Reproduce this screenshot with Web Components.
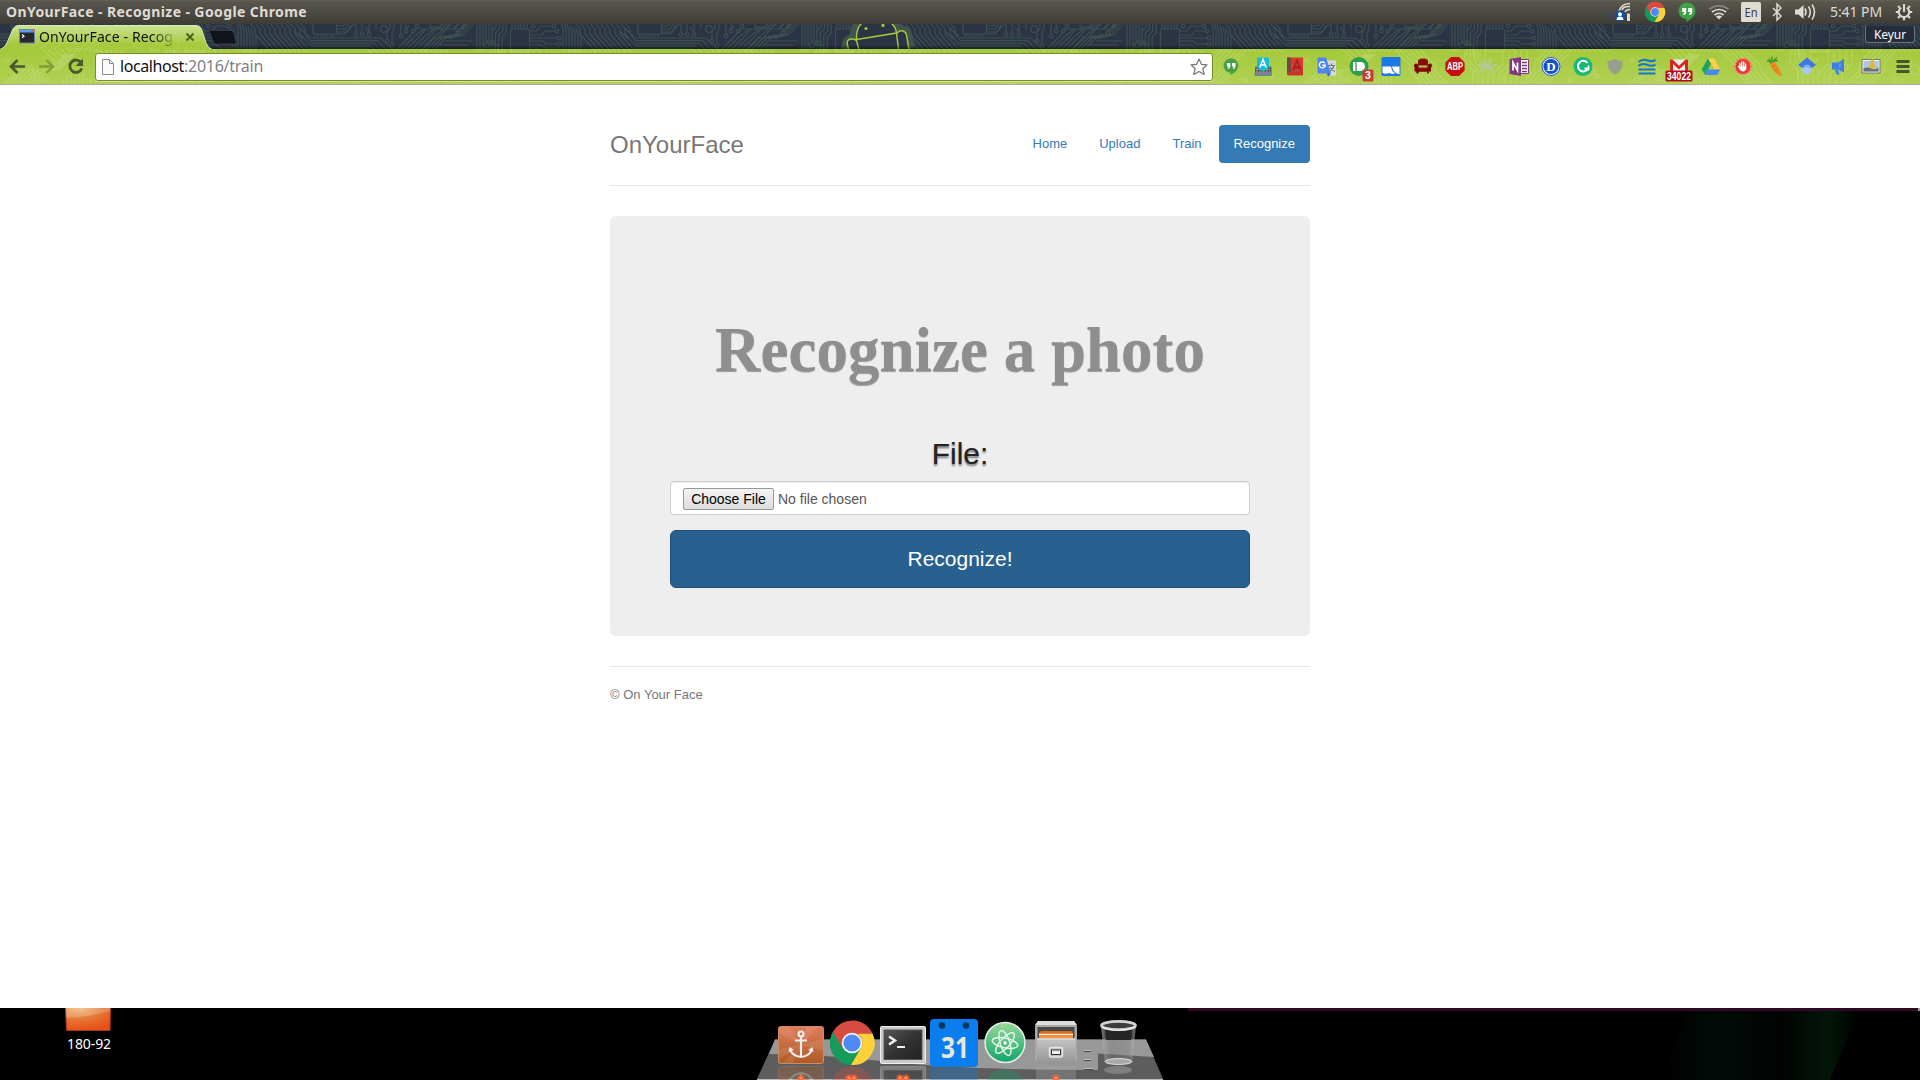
<!DOCTYPE html>
<html lang="en">
<head>
<meta charset="utf-8">
<title>OnYourFace - Recognize</title>
<style>
html,body{margin:0;height:100%;background:#000;overflow:hidden}
body{display:flex;flex-direction:column;width:1920px;height:1080px;font-family:"Noto Sans","Open Sans",sans-serif}
</style>
</head>
<body>
<system-panel></system-panel>
<tab-strip></tab-strip>
<browser-toolbar></browser-toolbar>
<web-page>
  <site-header>OnYourFace</site-header>
  <recognize-form></recognize-form>
  <site-footer>© On Your Face</site-footer>
</web-page>
<desktop-area></desktop-area>
<script>
const define=(name,css,html)=>customElements.define(name,class extends HTMLElement{
  connectedCallback(){
    if(this.shadowRoot)return;
    const t=document.createElement('template');
    t.innerHTML=`<style>:host,*{box-sizing:border-box}${css}</style>${html}`;
    this.attachShadow({mode:'open'}).appendChild(t.content.cloneNode(true));
  }
});

/* Label whose letter spacing is adjusted so that the text fills a given width. */
customElements.define('fit-label',class extends HTMLElement{
  connectedCallback(){
    if(this.shadowRoot)return;
    this.attachShadow({mode:'open'}).innerHTML='<style>:host{display:inline-block;white-space:nowrap;flex:none}</style><span><slot></slot></span>';
    requestAnimationFrame(()=>this.fit());
    this.fit();
  }
  fit(){
    const s=this.shadowRoot.querySelector('span');
    s.style.letterSpacing='0px';
    const n=this.textContent.length,w=s.getBoundingClientRect().width;
    if(w)s.style.letterSpacing=((+this.getAttribute('w')-w)/n).toFixed(3)+'px';
  }
});

/* Repeating circuit-board artwork, 325px wide. */
function circuit(id,color,dark,x0,y0){
  let d='',c='';
  const ring=(x,y,r=1.8)=>c+=`<circle cx="${x}" cy="${y}" r="${r}"/>`;
  for(let x=5;x<26;x+=3)d+=`M${x} 34v3`;
  for(let i=0;i<3;i++)d+=`M26 ${26+i*3}h${7+i*2}l4 -${5+i}`;
  d+='M26 34h9l10-11h68M46 24v8M52 24v8M59 24v8l-4-5M66 24v5M80 24v4l-3 4v7M84 24v5l-2 4v10M91 24v10M96 24v5l3-3';
  [[46,34.5],[52,34.5],[59,34.5],[77,41],[82,45.5],[91,36],[96,31],[103,31],[107,26],[154,26],[148,32.5],[223,26],[244,26],[247,31],[249,38],[249,44]].forEach(p=>ring(...p));
  ring(74,29,3.4);ring(177,45,2.6);
  for(let i=0;i<5;i++)d+=`M-40 ${38+i*2.6}H${71-i*3.6}l14 14`;
  for(let i=0;i<7;i++)d+=`M${84+i*5} 52l${15} -${15}l${i%2?10:7} -${8}h${22-i}l6 -6`;
  for(let i=0;i<4;i++)d+=`M${112+i*5} ${50-i}l12 -12h${18-i}l12 -14`;
  d+='M115 29h16l6-5M121 27v2M124 27v2M127 27v2M130 45h28M136 41h26';
  for(let i=0;i<6;i++)d+=`M${167+i*3} 20V${i>2?40:52}${i>2?'l6 6v8':''}`;
  for(let i=0;i<4;i++)d+=`M${186+i*3.4} 22v${5+i*2}l-4 4v24`;
  for(let i=0;i<6;i++)d+=`M${202+i*3} 24v5M${202+i*3} 49v3`;
  d+='M220 31h6l5-5h11M220 35h12l3-4h10M220 38h27M220 41h13l3 3h11M220 45h11l4 3h16M220 48h7l4 4';
  for(let i=0;i<7;i++)d+=`M${253+i*3} ${52}v-${24-i*1.5}l-2-7`;
  for(let i=0;i<11;i++)d+=`M${264+i*5} 22l${6} 7v5l16 18`;
  d+='M310 31l8 8M314 27l10 10';
  /* lower half, seen through the toolbar */
  for(let i=0;i<6;i++)d+=`M${20+i*5} 84l14-14h${30-i*3}l16-16M${110+i*5} 50l15 15v5l14 16M${262+i*5} 50l-12 12v8l-14 14`;
  for(let i=0;i<8;i++)d+=`M${78+i*4} 88v-${10+i%3*4}`;
  [[22,60],[30,78],[46,68],[62,80],[190,72],[205,60],[219,78],[236,66],[300,62],[312,76],[285,80]].forEach(p=>ring(p[0],p[1],2));
  ring(52,78,6);ring(52,78,3);ring(305,70,5);
  for(let i=0;i<5;i++)d+=`M${180+i*5} 50v${12}l8 8v16M${208+i*6} 84v-10l10-10v-14`;
  return `<defs><pattern id="${id}" patternUnits="userSpaceOnUse" x="${x0}" y="${y0}" width="325" height="90"><g fill="none" stroke="${color}" stroke-width="1.15"><path d="${d}"/>${c}<rect x="3" y="22" width="23.5" height="12" rx="1" fill="${dark}"/><rect x="120" y="20" width="11" height="7" fill="${dark}"/><rect x="200.500" y="29" width="19" height="23" rx="1.500" fill="${dark}"/></g></pattern></defs>`;
}

const chrome=(r)=>`<g transform="scale(${r/22})"><circle r="22" fill="#db4437"/><path d="M-19-11A22 22 0 0 0-1 22L9 5-9 6Z" fill="#149a58"/><path d="M-19-11A22 22 0 0 0-1 22L9.500 4.500A10 10 0 0 1-9 5Z" fill="#159c5a"/><path d="M20.500-9.500A22 22 0 0 1-1 22L9 5A10.500 10.500 0 0 0 5-9.500Z" fill="#fdd13c"/><path d="M-19-11A22 22 0 0 1 20.500-9.500H0A10 10 0 0 0-9.500 5Z" fill="#d84b40"/><circle r="10.300" fill="#f3f3f3"/><circle r="8.600" fill="#4e8af4"/></g>`;
const hang=(c)=>`<path d="M0-9.500a8.500 8.500 0 0 0-8.500 8.500c0 4.800 4 8 8 8v3c4.500-2.500 9-6.500 9-11.500A8.500 8.500 0 0 0 0-9.500Z" fill="${c}"/><path d="M-4.800-4h4v4q0 2.600-3 3l0-1.500q1.300-.3 1.300-1.500h-2.300zM1.200-4h4v4q0 2.600-3 3l0-1.500q1.300-.3 1.300-1.500h-2.300z" fill="#fff"/>`;

/* ---------- system panel ---------- */
define('system-panel',`
:host{display:flex;flex:none;height:24px;justify-content:space-between;align-items:center;background:linear-gradient(#646251 0,#58564e 2px,#3d3c37 100%);color:#dfdbd2;font-size:14px;line-height:24px;padding-left:6px}
.t{font-weight:bold}
.tray{display:flex;align-items:center;height:24px}
svg{display:block;overflow:visible}
.time{margin:0 6px 0 7px;width:52px;font-size:14px}
`,`<fit-label class="t" w="301">OnYourFace - Recognize - Google Chrome</fit-label>
<div class="tray">
<svg width="32" height="24" viewBox="-16 -12 32 24"><g fill="none" stroke="#dfdbd2" stroke-width="1.600"><path d="M-4-1q2-7 11-7.500M-1-2q1-4 8-3.500M2 0q1-2.500 5-2.500"/></g><path d="M4 1.500h3v7.500H4z" fill="#dfdbd2"/><circle cx="-3" cy="4" r="5.600" fill="#0f4f9e"/><circle cx="-3" cy="2.300" r="2" fill="#fff"/><path d="M-6.500 8q0-3.500 3.500-3.500t3.500 3.500z" fill="#fff"/></svg>
<svg width="32" height="24" viewBox="-16 -12 32 24">${chrome(10)}</svg>
<svg width="32" height="24" viewBox="-16 -12 32 24">${hang('#43a047')}</svg>
<svg width="32" height="24" viewBox="-16 -12 32 24"><g fill="none" stroke="#dfdbd2" stroke-width="1.700"><path d="M-9.500-3q9.500-6.500 19 0" stroke="#8c8a83"/><path d="M-7 0q7-5 14 0"/><path d="M-4.500 3q4.500-3.500 9 0"/></g><path d="M0 7.500l-3-3q3-2.200 6 0z" fill="#dfdbd2"/></svg>
<svg width="32" height="24" viewBox="-16 -12 32 24"><rect x="-10" y="-10" width="20" height="20" rx="1.500" fill="#dfdbd2"/><text y="5" text-anchor="middle" textLength="13" lengthAdjust="spacingAndGlyphs" font-size="13" fill="#3c3b37" font-family="Noto Sans,sans-serif">En</text></svg>
<svg width="20" height="24" viewBox="-10 -12 20 24"><path d="M-4-4L4 4 0 8V-8l4 4L-4 4" fill="none" stroke="#dfdbd2" stroke-width="1.500"/></svg>
<svg width="36" height="24" viewBox="-18 -12 36 24"><path d="M-10-2.500h3.500l5-4.500V7l-5-4.500H-10z" fill="#dfdbd2"/><g fill="none" stroke="#dfdbd2" stroke-width="1.600"><path d="M0-3.500q2 3.500 0 7M3.500-5.500q3.500 5.500 0 11M7-7.500q5 7.500 0 15"/></g></svg>
<span class="time"><fit-label w="52">5:41 PM</fit-label></span>
<svg width="32" height="24" viewBox="-16 -12 32 24"><g fill="none" stroke="#dfdbd2"><path d="M-2.800-4.400a5.200 5.200 0 1 0 5.600 0" stroke-width="2"/><path d="M0-8V0" stroke-width="2"/><path d="M-4.500-4.500l-1.500-1.500M4.500-4.500l1.500-1.500M-4-4M-4 4l-2 2M4 4l2 2M-8.200 0h3M8.200 0h-3M0 8.200V5" stroke-width="2.200"/></g></svg>
</div>`);

/* ---------- tab strip ---------- */
define('tab-strip',`
:host{display:flex;flex:none;position:relative;height:25px;background:#2b3344;justify-content:space-between;line-height:25px}
.bg{position:absolute;inset:0;display:block}
.tab{position:relative;display:flex;align-items:center;width:240px;height:25px;padding-left:19px;font-size:14px;color:#111}
.title{width:135px;margin-left:4px;overflow:hidden;-webkit-mask-image:linear-gradient(90deg,#000 114px,rgba(0,0,0,.15) 135px);mask-image:linear-gradient(90deg,#000 114px,rgba(0,0,0,.15) 135px)}
.tab svg{display:block;position:relative;flex:none}
.user{position:relative;margin:1px 5px 6px 0;width:50px;height:18px;border:1px solid #69707b;border-top-color:#343b49;border-radius:3px;background:#252c3a;color:#fff;font-size:12px;line-height:18px;text-align:center}
`,`<svg class="bg" width="1920" height="25" viewBox="0 24 1920 25">${circuit('c','#3b4f4e','#2b3344',310,0)}<rect y="24" width="1920" height="25" fill="url(#c)"/>
<defs><linearGradient id="s" x2="0" y2="1"><stop offset="0" stop-color="#000" stop-opacity="0"/><stop offset="1" stop-color="#000" stop-opacity=".45"/></linearGradient>
<linearGradient id="tg" x2="0" y2="1"><stop offset="0" stop-color="#cce292"/><stop offset=".8" stop-color="#a6c93d"/></linearGradient></defs>
<path d="M852 41q-4 0-4 8M860 26q-5 6-4 15M893 24q5 5 5 9 8-3 8 4l3 12M858 41v8M897 33l2 16" fill="none" stroke="#40544b" stroke-width="13"/>
<path d="M857 49V37Q857 28 862 24H891Q897 29 897 35L899 49z" fill="#2b3344"/>
<path d="M849 49l-1.500-5q-.5-5 4.500-5 4 0 5 2l2 8z" fill="#2b3344"/><path d="M899 49l-2-16q3-3 6-2 3 1 3.500 4l2.500 14z" fill="#2b3344"/>
<path d="M848.500 49l-1.300-5q-.5-5 4.500-5 4 0 5 2l2 8M856.500 40Q856 28 862 23M891 23q5 4 5.500 10L856.500 39.500M896.500 33l2 16M897 33q3-3 6-2 3 1 3.500 4l2.500 15" fill="none" stroke="#a4c639" stroke-width="1.500"/>
<circle cx="866" cy="28.500" r="1.600" fill="#a4c639"/><circle cx="883" cy="25.500" r="1.600" fill="#a4c639"/>
<rect y="45" width="1920" height="4" fill="url(#s)"/>
<path d="M0 49.500Q5 48 7 43L13 29Q15 25.500 18 25.500H196Q200 25.500 201.500 29L206 43Q208 48 212 49.500Z" fill="url(#tg)" stroke="#d9ebae" stroke-width="1"/>
<g fill="none" stroke="#c2db7b" stroke-width="1" opacity=".45"><path d="M30 49l16-14h20l9-9M40 49l12-10h18l12-12M54 49l8-6h14l16-16M66 49h14l18-18h30M75 49h12l14-14h32l8 7M90 49l14-10h24l10 10M145 26l12 12h14M150 49l10-7h10M178 26v23"/></g>
<path d="M209 30.500h22q2 0 2.500 2l2.500 9q.5 2.500-2 2.500h-17q-3 0-4-3z" fill="#10141a" stroke="#3e444c" stroke-width=".7"/></svg>
<div class="tab">
<svg width="16" height="15" viewBox="0 0 16 15"><rect x=".5" y=".5" width="15" height="13.500" fill="#26282b" stroke="#7186a8"/><path d="M1 1h14v2.500H1z" fill="#5e9df0"/><path d="M12 1.300h2v1.500h-2z" fill="#e35a41"/><path d="M3 5.500l2 1.700-2 1.700" fill="none" stroke="#fff" stroke-width="1.200"/></svg>
<div class="title"><fit-label w="134">OnYourFace - Recog</fit-label></div>
<svg width="32" height="16" viewBox="-16 -8 32 16"><path d="M-3.500-3.500l7 7M3.500-3.500l-7 7" stroke="#4d6118" stroke-width="1.900"/></svg>
</div>
<div class="user"><fit-label w="32">Keyur</fit-label></div>`);

/* ---------- toolbar ---------- */
const icons=[
`<g transform="scale(.86)">${hang('#43a047')}</g>`,
`<rect x="-8" y="0" width="16.500" height="9.500" rx="1" fill="#5a6268"/><path d="M-8.500 6h17v3.500h-17z" fill="#78838a"/><path d="M-7 3h14M-7 5.500h14" stroke="#aab2b6" stroke-dasharray="2 1.300"/><path d="M-6-9H6V1L0 5-6 1z" fill="#19bcd8"/><path d="M-3.200 1L0-7 3.200 1M-2-1.500h4" fill="none" stroke="#fff" stroke-width="1.500"/>`,
`<path d="M-8-9H8V9H-6q-2 0-2-2z" fill="#d93a30"/><path d="M-8-9h4V6h-4z" fill="#6b4a47"/><path d="M-8 7q0-2 3-2H8v3.500H-6q-2 0-2-1.500z" fill="#c2352d"/><path d="M-2 4L2-6 6 4M-.5 1h5" fill="none" stroke="#a3231c" stroke-width="1.800"/>`,
`<path d="M0-6h9V9H3z" fill="#d6d8da"/><path d="M1-1h7M4.500-3v2M7-1Q5 4 2 5M3 1q2 3 5 4" stroke="#68757c" stroke-width="1.200" fill="none"/><path d="M-9.500-9H-1L4 7H-8q-1.500 0-1.500-1.500z" fill="#4a86ee"/><path d="M0 7h4L1 10z" fill="#2a56c6"/><path d="M-2.300-3.500a3 3 0 1 0 .6 2.300h-3" fill="none" stroke="#fff" stroke-width="1.400"/>`,
`<circle r="9.500" fill="#2f9e4c"/><rect x="-6" y="-4.500" width="2.400" height="9" rx=".8" fill="#fff"/><path d="M-2.300-4.500H1.500a4.500 4.500 0 0 1 0 9H-2.300z" fill="#fff"/><rect x="3.500" y="3" width="11" height="12" rx="1.500" fill="#c53e33"/><text x="9" y="12.800" text-anchor="middle" font-size="10.500" font-weight="bold" fill="#fff" font-family="Liberation Sans,sans-serif">3</text>`,
`<rect x="-9.500" y="-9.500" width="19" height="19" rx="1.500" fill="#1b78e6"/><path d="M-8.500 0H0Q1 6 4.500 6.500 1 8.500-1 6.500-8.500 8-8.500 6z" fill="#fff"/><path d="M1 0h7.500v8Q2 6 1 0z" fill="#fff"/>`,
`<path d="M-5-1v-4q0-3 5-3t5 3v4z" fill="#8b0a08"/><path d="M-5 1h10v4H-5z" fill="#a10d08"/><path d="M-9-1q0-2 2-2t2.500 3l.5 3H4l.5-3Q5-3 7-3t2 2q0 1.500-1 2v4h-2l-.5 2H4V5H-4l-.500 2h-2L-7 5h-1.500V1Q-9 .5-9-1z" fill="#7d0705"/>`,
`<path d="M-4-9.600H4L9.600-4V4L4 9.600H-4L-9.600 4V-4z" fill="#cc0c0c"/><text y="3.900" text-anchor="middle" textLength="16" lengthAdjust="spacingAndGlyphs" font-size="10.500" font-weight="bold" fill="#fff" font-family="Liberation Sans,sans-serif">ABP</text>`,
`<g fill="none" stroke="#b9c59c" stroke-width="2" stroke-linecap="round"><path d="M-4-6q0 3 4 4t4-4M-8-2q4 3 8 1M0-1q4 3 9-1M-7 5q4-1 6-5M1 0q1 5 7 5"/></g>`,
`<path d="M0-7h9.500V7H0z" fill="#fff" stroke="#80397b"/><path d="M3-4h5M3-1h5M3 2h5M3 5h5" stroke="#80397b" stroke-width="1.500"/><path d="M-9.500-7.500L2-9.500v19L-9.500 7.500z" fill="#80397b"/><path d="M-6 4V-4L-1.500 4V-4" fill="none" stroke="#fff" stroke-width="1.700"/>`,
`<circle r="9.300" fill="#f5f8ff"/><circle r="9" fill="none" stroke="#1450c8" stroke-width="1"/><circle r="7.600" fill="#1450c8"/><text y="4.600" text-anchor="middle" font-size="13" font-weight="bold" fill="#fff" font-family="Liberation Serif,serif">D</text>`,
`<circle r="9.500" fill="#17b978"/><path d="M4.500-3.500A5.300 5.300 0 1 0 5 2H1.500" fill="none" stroke="#fff" stroke-width="2"/><path d="M5.500-1v5" stroke="#fff" stroke-width="1.500"/>`,
`<path d="M0-7.500q4 2 7.500 2Q8.500 4 0 8.500-8.500 4-7.500-5.500-4-5.500 0-7.500z" fill="#989f8c"/>`,
`<g fill="none" stroke="#1b76c9" stroke-width="2.100"><path d="M-8.500-4.500q4-3.500 8.500-1.700t8.500-.300"/><path d="M-8.500-.700q4-3 8.500-1t8.500 0"/><path d="M-8.500 3H8.500M-8.500 7H8.500"/></g>`,
`<rect x="-9" y="-7" width="18" height="13" rx="1" fill="#f1efef"/><path d="M-9 6V-7h2.500L0-.8 6.500-7H9V6H6V-2.500L0 3-6-2.500V6z" fill="#d8261c"/><rect x="-13.500" y="4" width="27" height="11" rx="1.500" fill="#b00b12"/><text y="13.200" text-anchor="middle" textLength="24" lengthAdjust="spacingAndGlyphs" font-size="10.500" font-weight="bold" fill="#fff" font-family="Liberation Sans,sans-serif">34022</text>`,
`<path d="M-3-8H3L9.300 3H3.500z" fill="#ffcf48"/><path d="M-3-8L0-2.500-6 8.500-9.300 3z" fill="#1da362"/><path d="M-3 3H9.300L6 8.500H-6z" fill="#4688f4"/>`,
`<circle r="8.500" fill="#e33b2d"/><circle r="8" fill="none" stroke="#f59a8d"/><path d="M-3 2.500v-5.500M-1.200 1v-5.500M.7 1v-5.500M2.600 2v-4.500M-3 1.500l-1.500-1.500" stroke="#fff" stroke-width="1.300" stroke-linecap="round"/><path d="M-3.600 0h6.800v2q-.8 3-3.200 3T-3.600 2z" fill="#fff"/>`,
`<path d="M-5-3l4-2Q4 0 7 9q-2 1-3 0Q-4 3-5-3z" fill="#ee8a1d"/><path d="M-4-3L-6-8M-3-4V-10M-2-5L2-9M-3-4l-5-2M-2-5l5-1" stroke="#3e9b2f" stroke-width="1.600"/><path d="M-3 0l3-1.500M0 4l2-1" stroke="#cf6d0e"/>`,
`<path d="M0-9L9-1.500 4 2H-4L-9-1.500z" fill="#3c78e0"/><circle cy="3" r="4.700" fill="#a6c8f8"/><path d="M-4.500 1.500Q0-2 4.500 1.500" fill="none" stroke="#6ea1ef" stroke-width="1.500"/>`,
`<g transform="translate(-1 0)"><path d="M-6-4H0L6-7.500V6L0 3h-6z" fill="#3f80e8"/><path d="M-3 3h3l1.500 5h-3z" fill="#3f80e8"/><path d="M2-3V1.500" stroke="#79a9f3"/></g>`,
`<rect x="-9" y="-7" width="18" height="13.500" fill="#f4f1ea" stroke="#77756d"/><path d="M-7.500-5.500h15V5h-15z" fill="#a8c9df"/><path d="M-7.500 2q4-2 8 0t7-1v4h-15z" fill="#66707a"/><path d="M-.3-7h3v5.500h2.500L1.200 3-2.800-1.500h2.500z" fill="#efb51c"/>`,
`<path d="M-6.500-5h13M-6.500 0h13M-6.500 5h13" stroke="#46562a" stroke-width="3"/>`
];
define('tool-icon',`:host{display:block;flex:none;width:32px;height:35px}`,`<slot></slot>`);
define('address-bar',`
:host{display:flex;align-items:center;width:1118px;height:28px;border:1px solid #748f29;border-radius:3px;background:#fff;padding:0 4px 0 6px;font-size:16px;line-height:26px;color:#808080;box-shadow:0 1px #cfe398}
b{font-weight:normal;color:#111}
svg{display:block;flex:none}
.url{display:flex;margin:-1px 0 1px 6px;flex:1}
`,`<svg width="12" height="16" viewBox="0 0 12 16"><path d="M.5.500h7l4 4v11H.5z" fill="#fafafa" stroke="#8b8b8b"/><path d="M7.500.500v4h4" fill="none" stroke="#8b8b8b"/></svg>
<div class="url"><b><fit-label w="64">localhost</fit-label></b><fit-label w="79">:2016/train</fit-label></div>
<svg width="18" height="18" viewBox="-9 -9 18 18"><path d="M0-8L2.400-2.700 8-2.200 3.800 1.700 5.200 7.500 0 4.500-5.200 7.500-3.800 1.700-8-2.200-2.400-2.700z" fill="#fff" stroke="#757575" stroke-width="1.200" stroke-linejoin="round"/></svg>`);
define('browser-toolbar',`
:host{display:flex;flex:none;position:relative;height:36px;border-bottom:1px solid #a9a9a9;background:linear-gradient(#a4c93b,#b1d154)}
.bg{position:absolute;left:0;top:0;display:block}
.nav,address-bar,.ext{position:relative}
.nav{display:flex;width:94px;height:35px}
.nav svg{display:block}
address-bar{margin:4px 2px 0 1px}
.ext{display:flex}
.ext svg{display:block;overflow:visible}
`,`<svg class="bg" width="1920" height="35" viewBox="0 49 1920 35">${circuit('t','#c4dc80','none',310,0)}<rect y="49" width="1920" height="35" fill="url(#t)" opacity=".5"/></svg>
<div class="nav"><svg width="94" height="35" viewBox="0 0 94 35"><g fill="none" stroke="#4d562f" stroke-width="2.600"><path d="M11 17.500h14M17.500 11l-6.500 6.500 6.500 6.500"/><path d="M39 17.500h14M46.500 11l6.500 6.500-6.500 6.500" stroke="#839d3a" stroke-width="2.300"/><path d="M81 13.500a6.200 6.200 0 1 0 .8 6" stroke-width="2.800"/></g><path d="M83 9.500v7.500h-7.500z" fill="#4d562f"/></svg></div>
<address-bar></address-bar>
<div class="ext">${icons.map(i=>`<tool-icon><svg width="32" height="35" viewBox="-16 -17.500 32 35">${i}</svg></tool-icon>`).join('')}</div>`);

/* ---------- page ---------- */
define('web-page',`:host{display:flex;flex-direction:column;align-items:center;flex:none;height:923px;background:#fff;padding-top:40px;font-family:"Liberation Sans",Arial,sans-serif;font-size:13px;color:#333}`,`<slot></slot>`);
define('nav-pill',`:host{display:block;padding:10px 15px;height:38px;line-height:18px;color:#337ab7;border-radius:4px}:host([active]){background:#337ab7;color:#fff}`,`<slot></slot>`);
define('site-header',`
:host{display:flex;justify-content:space-between;align-items:flex-start;width:700px;height:61px;border-bottom:1px solid #e5e5e5}
h3{margin:0;font-size:24px;font-weight:normal;line-height:40px;color:#777}
nav{display:flex;gap:2px}
`,`<h3><slot></slot></h3><nav><nav-pill>Home</nav-pill><nav-pill>Upload</nav-pill><nav-pill>Train</nav-pill><nav-pill active>Recognize</nav-pill></nav>`);
define('file-field',`
:host{display:flex;align-items:center;height:34px;border:1px solid #ccc;border-radius:4px;background:#fff;box-shadow:inset 0 1px 1px rgba(0,0,0,.075);padding:1px 12px 0;font-size:14px;color:#555}
button{width:91px;height:22px;margin:0 4px 0 0;padding:0;border:1px solid #979797;border-radius:2px;background:linear-gradient(#f4f4f4,#dcdcdc);font:14px "Liberation Sans",Arial,sans-serif;color:#000;white-space:nowrap}
`,`<button>Choose File</button><span>No file chosen</span>`);
define('recognize-form',`
:host{display:flex;flex-direction:column;width:700px;height:420px;margin-top:30px;padding:99px 60px 0;border-radius:6px;background:#eee;text-align:center}
h1{margin:0;font:bold 63px/70px "Liberation Serif","Times New Roman",serif;color:#8e8e8e;text-shadow:0 1px 1px #999;white-space:nowrap}
label{display:block;margin-top:52px;font-size:30px;line-height:33px;color:#222;text-shadow:0 2px 2px #777}
file-field{margin-top:11px}
.go{margin-top:15px;height:58px;border:1px solid #204d74;border-radius:6px;background:#286090;color:#fff;font:21px "Liberation Sans",Arial,sans-serif}
`,`<h1>Recognize a photo</h1><label>File:</label><file-field></file-field><button class="go">Recognize!</button>`);
define('site-footer',`:host{display:block;width:700px;margin-top:30px;border-top:1px solid #e5e5e5;padding-top:19px;line-height:18px;color:#777}`,`<slot></slot>`);

/* ---------- desktop ---------- */
const anchor=`<rect x="778.500" y="1026.500" width="45" height="37" rx="2" fill="url(#an)" stroke="#d18a68"/><path d="M801 1045l-22-12v-6h10zM801 1045l5-18h12zM801 1045l22-6v12zM801 1045l-22 4v10zM801 1045l-8 18h-10z" fill="#fff" opacity=".09"/><g fill="none" stroke="#eee" stroke-width="2.200"><circle cx="801" cy="1034" r="2.500"/><path d="M801 1037v19M795 1040.500h12M790 1049q2 7 11 8 9-1 11-8"/></g><path d="M788.500 1052l1-5 4.500 3zM813.500 1052l-1-5-4.500 3z" fill="#eee"/>`;
const term=`<rect x="880.500" y="1026.500" width="45" height="37" rx="1" fill="#c9cac8" stroke="#eee"/><rect x="884" y="1030" width="38" height="29.500" fill="url(#tm)" stroke="#555"/><path d="M889 1036.500l6 4-6 4" fill="none" stroke="#f2f2f2" stroke-width="2.500"/><path d="M897 1047h8" stroke="#f2f2f2" stroke-width="2"/>`;
define('app-dock',`:host{display:block;width:408px;height:72px}svg{display:block}`,`<svg width="408" height="72" viewBox="756 1008 408 72">
<defs><linearGradient id="an" x2="0" y2="1"><stop offset="0" stop-color="#e07c5b"/><stop offset="1" stop-color="#ad5c25"/></linearGradient>
<linearGradient id="tm" x2="1" y2="1"><stop offset="0" stop-color="#555"/><stop offset=".5" stop-color="#333"/><stop offset="1" stop-color="#222"/></linearGradient>
<linearGradient id="at" x2="0" y2="1"><stop offset="0" stop-color="#9ad89a"/><stop offset="1" stop-color="#10a56c"/></linearGradient>
<linearGradient id="fl" x2="0" y2="1"><stop offset="0" stop-color="#c4c4c4"/><stop offset="1" stop-color="#949494"/></linearGradient>
<linearGradient id="tr" x2="1" y2="0"><stop offset="0" stop-color="#bbb" stop-opacity=".65"/><stop offset=".3" stop-color="#777" stop-opacity=".35"/><stop offset=".8" stop-color="#888" stop-opacity=".4"/><stop offset="1" stop-color="#ccc" stop-opacity=".55"/></linearGradient>
<radialGradient id="gl"><stop offset="0" stop-color="#ffb08e"/><stop offset=".35" stop-color="#ff6a38"/><stop offset="1" stop-color="#ff5a20" stop-opacity="0"/></radialGradient></defs>
<path d="M775 1039.500H1146L1163 1079H757z" fill="#5d5d5d"/>
<path d="M775 1039.500H1146L1154 1057 1098 1053.500V1070Q960 1070 881 1061 830 1055 769 1054z" fill="#989898"/>
<path d="M757 1079.500H1163" stroke="#bdbdbd"/>
<g opacity=".3"><g transform="matrix(1 0 0 -1 0 2130)">${anchor}${term}</g><g transform="translate(852 1089)">${chrome(22)}</g><rect x="930" y="1068" width="48" height="12" fill="#0a7bea"/><circle cx="1005" cy="1089" r="20" fill="#10a56c"/><rect x="1036" y="1066" width="40" height="14" fill="#aaa"/><ellipse cx="1118" cy="1070" rx="14" ry="4" fill="#ccc"/></g>
${anchor}<g transform="translate(852 1043)">${chrome(22)}</g>${term}
<rect x="930" y="1019" width="48" height="48" rx="4" fill="#0b7eef"/><circle cx="942" cy="1025.500" r="3.300" fill="#07395f"/><circle cx="966" cy="1025.500" r="3.300" fill="#07395f"/><text x="955" y="1057.500" text-anchor="middle" textLength="28" lengthAdjust="spacingAndGlyphs" font-size="29" font-weight="bold" fill="#e8e6dc" font-family="Open Sans,Noto Sans,sans-serif">31</text>
<circle cx="1005" cy="1042.500" r="20" fill="url(#at)" stroke="#e8eee8" stroke-width="1.500"/><g transform="translate(1005 1043)" fill="none" stroke="#e4f6e4" stroke-width="1.400"><ellipse rx="13" ry="4.800" transform="rotate(12)"/><ellipse rx="13" ry="4.800" transform="rotate(72)"/><ellipse rx="13" ry="4.800" transform="rotate(-48)"/><circle r="1.700" fill="#fff" stroke="none"/></g>
<path d="M1038 1021h36l3 5v34h-42v-34z" fill="#a9a9a9"/><path d="M1038 1021h36l3 4h-42z" fill="#dedede"/><rect x="1037.500" y="1027" width="37" height="14" fill="#4a4a4a"/><path d="M1039 1033l2-2h31l1 2v6h-34z" fill="#d9681d"/><path d="M1039 1034.500h34" stroke="#fff1dc" stroke-width="1.300"/><path d="M1039 1036h34v4h-34z" fill="#f5923a"/><rect x="1037" y="1038.500" width="38.500" height="25.500" rx="1" fill="url(#fl)"/><path d="M1037 1039h38.500" stroke="#e8e8e8"/><rect x="1049.500" y="1047.500" width="13" height="9.500" rx="1.500" fill="#bbb" stroke="#e6e6e6" stroke-width="1.400"/><rect x="1051.500" y="1050" width="9" height="4.500" fill="#eee" stroke="#333"/>
<g stroke="#444"><path d="M1084 1051.500h7M1084 1060.500h7M1084 1069.500h9"/><path d="M1084 1050.500h7M1084 1059.500h7M1084 1068.500h9" stroke="#ccc" stroke-width=".8"/></g>
<path d="M1101 1026h35l-4 36q-14 5-27 0z" fill="url(#tr)"/><path d="M1105 1030h27l-1 10h-25z" fill="#262626"/><ellipse cx="1118.500" cy="1061.500" rx="13.500" ry="3" fill="#aaa" stroke="#ddd"/><ellipse cx="1118.500" cy="1025.500" rx="17" ry="4.200" fill="#3d3d3d" stroke="#d2d2d2" stroke-width="2.800"/><path d="M1102 1027q16 7 33 0" fill="none" stroke="#f4f4f4" stroke-width="1"/>
${[801,849,854,900,906,1056].map(x=>`<circle cx="${x}" cy="1078" r="4.500" fill="url(#gl)"/>`).join('')}
</svg>`);
define('desktop-area',`
:host{display:flex;flex:none;position:relative;height:72px;justify-content:center;background:#000;overflow:hidden}
.glow{position:absolute;left:1660px;top:0;width:200px;height:72px}
.strip{position:absolute;left:1188px;top:0;width:730px;height:3px;background:#300a24}
.corner{position:absolute;left:1918px;top:0;width:2px;height:3px;background:#999}
.file{position:absolute;left:49px;top:0;width:80px;display:flex;flex-direction:column;align-items:center;color:#fff;font-size:14px;line-height:20px}
.file svg{display:block;margin:0 3px 3px 0}
`,`<svg class="glow" viewBox="0 0 200 72"><defs><linearGradient id="g"><stop offset="0" stop-color="#000"/><stop offset=".3" stop-color="#020b08"/><stop offset=".6" stop-color="#010303"/><stop offset=".85" stop-color="#031608"/><stop offset="1" stop-color="#000"/></linearGradient></defs><path d="M30 0H200L170 72H0z" fill="url(#g)"/></svg>
<div class="strip"></div><div class="corner"></div>
<div class="file"><svg width="46" height="23" viewBox="0 0 46 23"><defs><radialGradient id="o" cx=".3" cy="0" r="1"><stop offset="0" stop-color="#f3bd78"/><stop offset=".5" stop-color="#e47b38"/><stop offset="1" stop-color="#ea4f17"/></radialGradient></defs><path d="M.5-1h45l-.500 23.500H1.500z" fill="url(#o)" stroke="#a63c15"/><path d="M1 0h44v3Q24 9 1 10z" fill="#fff" opacity=".18"/></svg><fit-label w="44">180-92</fit-label></div>
<app-dock></app-dock>`);
</script>
</body>
</html>
